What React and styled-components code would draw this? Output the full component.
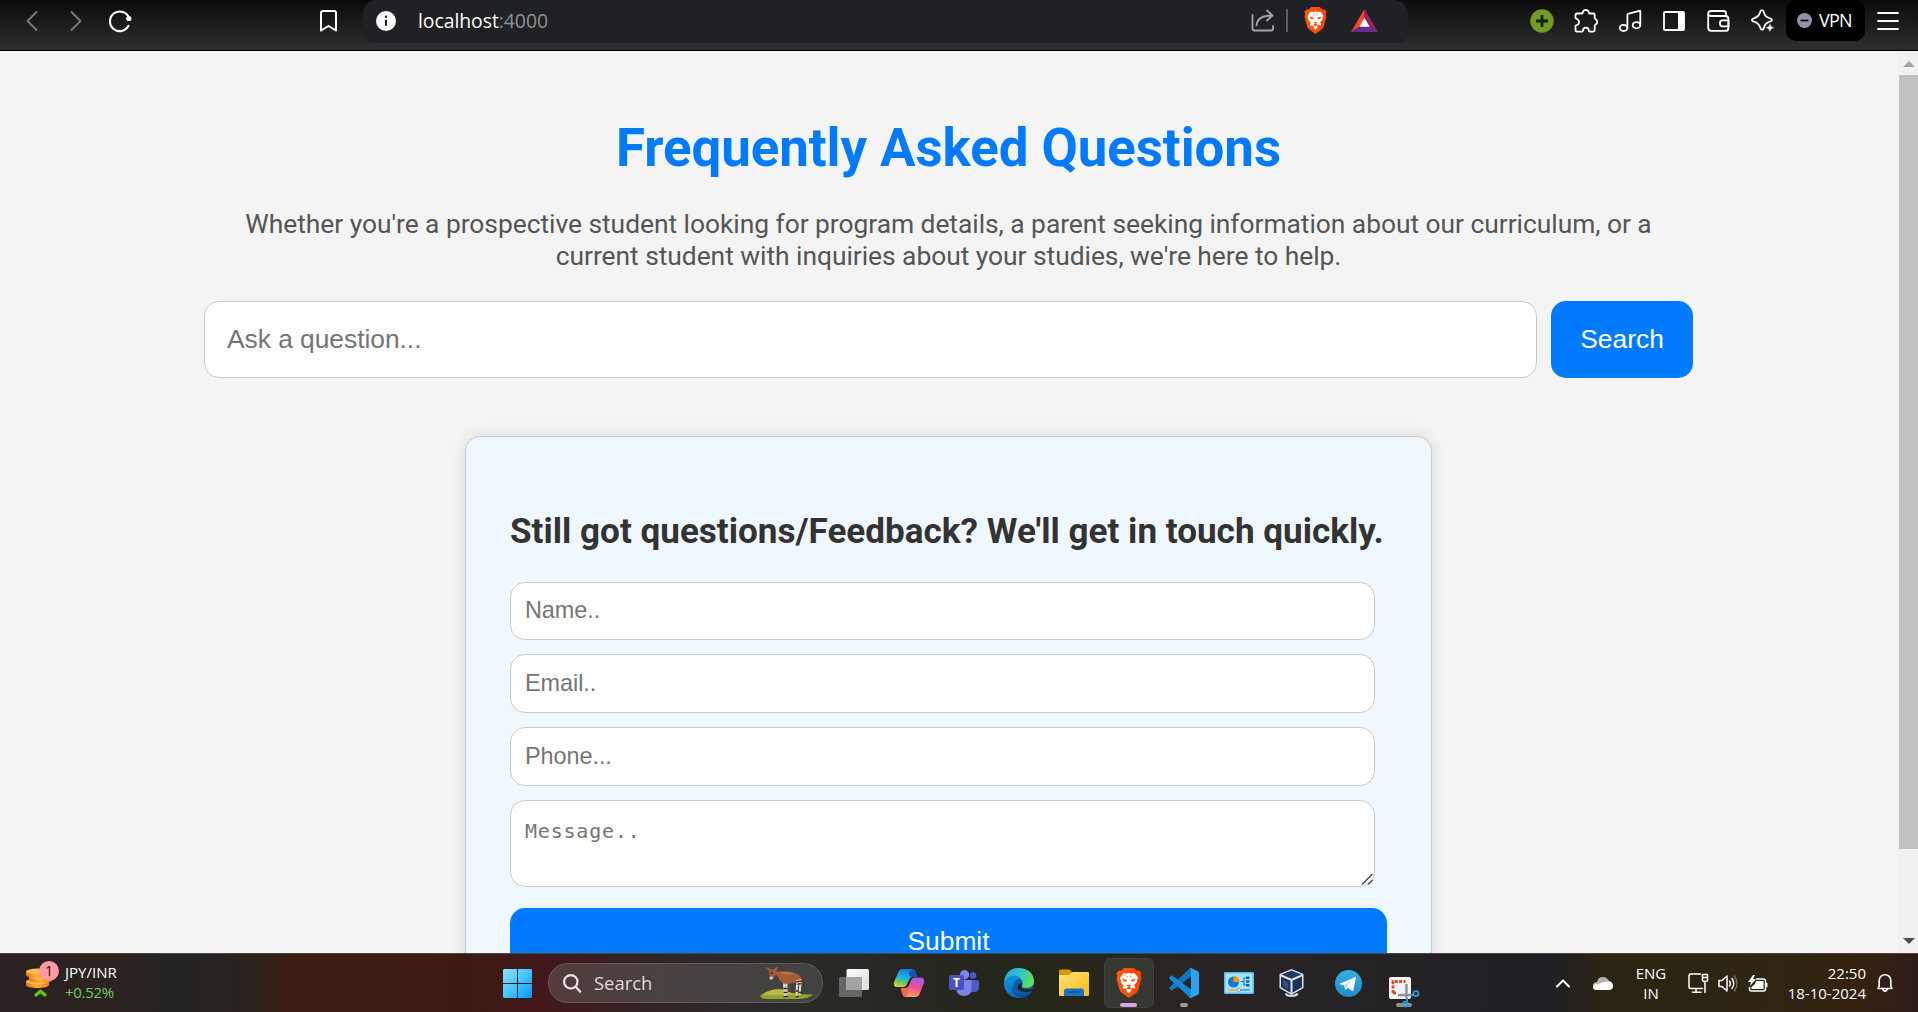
import React from "react";
import styled, { createGlobalStyle, css } from "styled-components";

const GlobalStyle = createGlobalStyle`
  * { box-sizing: border-box; }
  html, body { margin: 0; padding: 0; overflow: hidden; }
  body { font-family: Roboto, sans-serif; background: #f4f4f4; }
`;

const Screen = styled.div`
  width: 1918px;
  height: 1012px;
  display: flex;
  flex-direction: column;
  overflow: hidden;
`;

/* ---------- browser toolbar ---------- */

const Toolbar = styled.header`
  flex: none;
  display: flex;
  height: 51px;
  border-bottom: 1px solid #000;
  background: linear-gradient(#0a0a0a, #2c2c2c 90%);
  color: #fff;
  font-family: "Noto Sans", "Open Sans", sans-serif;
`;

const NavGroup = styled.div`
  display: flex;
  height: 41px;
  margin-left: ${(p) => p.$offset || 0}px;
`;

const IconSlot = styled.span`
  display: flex;
  align-items: center;
  justify-content: center;
  width: ${(p) => p.$width || 44}px;
  height: 41px;
  svg { display: block; overflow: visible; }
`;

const AddressBar = styled.div`
  display: flex;
  align-items: center;
  width: 1045px;
  height: 43px;
  margin-left: 13px;
  padding: 0 30px 2px 13px;
  border-radius: 14px 14px 10px 10px;
  background: #202124;
  svg { display: block; }
`;

const Url = styled.span`
  flex: 1;
  margin-left: 22px;
  font-family: "Open Sans", "Noto Sans", sans-serif;
  font-size: 19.4px;
  line-height: 24px;
  letter-spacing: -0.05px;
`;

const Port = styled.span`
  color: #8d9095;
`;

const Separator = styled.i`
  width: 2px;
  height: 23px;
  margin: 0 16px 0 12px;
  background: #5c5d60;
`;

const VpnPill = styled.div`
  display: flex;
  align-items: center;
  gap: 7px;
  width: 79px;
  height: 41px;
  margin-left: 2px;
  padding: 0 0 1px 11px;
  border-radius: 10px;
  background: #000;
  font-family: "Open Sans", sans-serif;
  font-size: 18px;
  letter-spacing: -0.8px;
`;

/* ---------- page ---------- */

const Viewport = styled.div`
  flex: none;
  display: flex;
  height: 902px;
  overflow: hidden;
  background: #f4f4f4;
`;

const Page = styled.main`
  width: 1898px;
  display: flex;
  flex-direction: column;
  align-items: center;
  height: 902px;
  padding-right: 1px;
  overflow: hidden;
`;

const Title = styled.h1`
  margin: 66px 0 29px;
  color: #007bff;
  font-size: 52.8px;
  font-weight: 700;
  line-height: 62px;
  letter-spacing: -0.05px;
  white-space: nowrap;
`;

const Intro = styled.p`
  margin: 0 0 29px;
  color: #555;
  font-size: 26.4px;
  line-height: 32px;
  letter-spacing: -0.04px;
  text-align: center;
  white-space: nowrap;
`;

const SearchRow = styled.div`
  display: flex;
  gap: 14px;
  margin-bottom: 58px;
`;

const fieldBase = css`
  display: block;
  border: 1px solid #ccc;
  border-radius: 15px;
  outline: none;
  background: #fff;
  &::placeholder { color: #757575; opacity: 1; }
`;

const SearchInput = styled.input`
  ${fieldBase}
  width: 1333px;
  height: 77px;
  padding: 0 22px;
  font: 26.4px "Liberation Sans", Arial, sans-serif;
  letter-spacing: -0.04px;
`;

const BlueButton = styled.button`
  flex: none;
  width: ${(p) => p.$width}px;
  height: ${(p) => p.$height}px;
  padding: 0;
  border: 0;
  border-radius: 15px;
  background: #007bff;
  color: #fff;
  font: 26.4px "Liberation Sans", Arial, sans-serif;
`;

const Card = styled.form`
  flex: none;
  width: 967px;
  height: 620px;
  padding: 74px 44px 0;
  border: 1px solid #ccc;
  border-radius: 15px;
  background: #f0f8ff;
  box-shadow: 0 0 16px rgba(0, 0, 0, 0.1);
`;

const CardTitle = styled.h2`
  margin: 0 0 30px;
  color: #333;
  font-size: 35.1px;
  font-weight: 700;
  line-height: 41px;
  white-space: nowrap;
`;

const Fields = styled.div`
  display: flex;
  flex-direction: column;
  gap: 14px;
  margin-bottom: 21px;
`;

const Field = styled.input`
  ${fieldBase}
  width: 865px;
  height: ${(p) => p.$height || 59}px;
  padding: 0 15px ${(p) => (p.$height ? 2 : 1)}px 14px;
  font: 23.4px "Liberation Sans", Arial, sans-serif;
  letter-spacing: -0.04px;
`;

const MessageWrap = styled.div`
  position: relative;
  width: 865px;
  height: 87px;
`;

const Message = styled.textarea`
  ${fieldBase}
  width: 865px;
  height: 87px;
  padding: 15px 14px;
  resize: none;
  font: 20px/31px "DejaVu Sans Mono", monospace;
  letter-spacing: 0.8px;
`;

const Grip = styled.svg`
  position: absolute;
  right: 2px;
  bottom: 2px;
`;

const Scrollbar = styled.aside`
  display: flex;
  flex-direction: column;
  align-items: flex-end;
  width: 20px;
  height: 902px;
  background: #f1f1f1;
`;

const Arrow = styled.i`
  width: 0;
  height: 0;
  margin: ${(p) => (p.$down ? "89px 3px 0 0" : "10px 3px 8px 0")};
  border: 6px solid transparent;
  border-width: ${(p) => (p.$down ? "6px 6px 0" : "0 6px 6px")};
  border-top-color: ${(p) => (p.$down ? "#505050" : "transparent")};
  border-bottom-color: ${(p) => (p.$down ? "transparent" : "#a3a3a3")};
`;

const Thumb = styled.i`
  width: 19px;
  height: 774px;
  background: #c1c1c1;
`;

/* ---------- taskbar ---------- */

const Taskbar = styled.footer`
  flex: none;
  display: flex;
  height: 59px;
  border-top: 1px solid #4a4542;
  background: linear-gradient(
    90deg,
    #2a2224 0, #2c231f 100px, #232321 180px, #2a221d 250px, #3a1d13 290px,
    #3b1a13 460px, #43171a 540px, #332222 640px, #2b2b2a 740px, #272722 900px,
    #25261a 1010px, #26261c 1100px, #2b2521 1160px, #272325 1260px,
    #242225 1400px, #201f25 1550px, #2a2414 1600px, #2e2512 1780px,
    #35210f 1860px, #2f1c1a 1918px
  );
  color: #fff;
  font-family: "Open Sans", "Noto Sans", sans-serif;
  svg { display: block; overflow: visible; }
`;

const Widget = styled.div`
  display: flex;
  width: 490px;
  padding: 5px 0 0 25px;
`;

const CoinHolder = styled.div`
  position: relative;
  width: 40px;
  height: 45px;
`;

const Badge = styled.b`
  position: absolute;
  left: 14px;
  top: 2px;
  width: 20px;
  height: 20px;
  border-radius: 50%;
  background: #ff99a4;
  color: #2a1416;
  font-size: 14px;
  font-weight: 400;
  line-height: 20px;
  text-align: center;
`;

const Lines = styled.div`
  display: flex;
  flex-direction: column;
  font-size: 15px;
  line-height: 20px;
  text-align: ${(p) => p.$align || "left"};
  width: ${(p) => (p.$width ? p.$width + "px" : "auto")};
  padding-top: ${(p) => p.$top || 0}px;
  white-space: nowrap;
`;

const Gain = styled.span`
  color: #6ccb5f;
  letter-spacing: -0.3px;
`;

const AppSlot = styled.div`
  position: relative;
  display: flex;
  align-items: center;
  justify-content: center;
  width: 55px;
  height: 58px;
`;

const ActiveTile = styled.div`
  display: flex;
  align-items: center;
  justify-content: center;
  width: 50px;
  height: 50px;
  border: 1px solid #40403a;
  border-radius: 6px;
  background: #373732;
`;

const Indicator = styled.i`
  position: absolute;
  bottom: 5px;
  left: ${(p) => (55 - p.$width) / 2}px;
  width: ${(p) => p.$width}px;
  height: 4px;
  border-radius: 2px;
  background: ${(p) => p.$color};
`;

const SearchPill = styled.div`
  display: flex;
  align-items: center;
  width: 275px;
  height: 40px;
  margin: 9px 3px 0;
  padding: 0 8px 0 14px;
  border: 1px solid rgba(255, 255, 255, 0.13);
  border-radius: 20px;
  background: linear-gradient(90deg, #553a3b, #484241 40%, #424240);
`;

const SearchLabel = styled.span`
  flex: 1;
  margin-left: 13px;
  color: #dedada;
  font-size: 18.4px;
  line-height: 26px;
`;

const Tray = styled.div`
  display: flex;
  align-items: center;
  margin-left: 125px;
`;

const TrayItem = styled.span`
  flex: none;
  display: flex;
  width: ${(p) => p.$width}px;
  margin-left: ${(p) => p.$before || 0}px;
`;

const LetterTile = styled.span`
  position: absolute;
  left: 13px;
  top: 21px;
  width: 15px;
  height: 15px;
  border-radius: 2px;
  background: #4a50bd;
  color: #fff;
  font: 700 12px/15px "Open Sans", sans-serif;
  text-align: center;
`;

const Dropped = styled.span`
  padding-top: 18px;
  position: relative;
  z-index: 1;
`;

/* ---------- icons ---------- */

const Line = ({ w = 24, h = 24, color = "#fff", sw = 1.8, children }) => (
  <svg width={w} height={h} viewBox={`0 0 ${w} ${h}`} fill="none" stroke={color}
    strokeWidth={sw} strokeLinecap="round" strokeLinejoin="round">
    {children}
  </svg>
);

const BraveMark = ({ w, h, id }) => (
  <svg width={w} height={h} viewBox="0 0 24 28" preserveAspectRatio="none">
    <defs>
      <linearGradient id={id} x1="0" x2="1">
        <stop offset="0" stopColor="#ff5a10" />
        <stop offset="1" stopColor="#ff4000" />
      </linearGradient>
    </defs>
    <path d="M7.500 0h9l2.700 2.600 2-.3L23.600 5l-.9 2.300.8 2.300-2.900 11q-.4 1.400-1.500 2.200L12 28l-7.100-5.200q-1.100-.8-1.500-2.200l-2.900-11 .8-2.300L.4 5l2.400-2.700 2 .3z" fill={`url(#${id})`} />
    <path d="M7 4.600l2.600.5L12 4.600l2.400.5 2.600-.5 3.400 4.200-1.100 2.300.3 1.800-3 3.300 1.400 1.300-.8 1.600-2.200-.4-1.400 1.100.8 1.500L12 23.700l-2.400-1.900.8-1.500L9 19.200l-2.200.4-.8-1.600 1.400-1.300-3-3.300.3-1.800-1.100-2.300z" fill="#fff" />
    <path d="M5.600 9.900l4.600 1.300-.6 1.500-2.300-.3zM18.400 9.900l-4.600 1.300.6 1.500 2.300-.3zM9.500 16.300l2.500 1.200 2.500-1.200-2.500-.8zM9.300 18.700L12 17.200l2.700 1.500-2.700 1.300zM8.600 6.700l2.200.9.4 1.300zM15.400 6.700l-2.200.9-.4 1.300z" fill="#fc4c0e" />
  </svg>
);

const InfoIcon = () => (
  <svg width="20" height="20" viewBox="0 0 20 20">
    <circle cx="10" cy="10" r="10" fill="#fff" />
    <circle cx="10" cy="5.800" r="1.200" fill="#202124" />
    <path d="M10 8.800v6" stroke="#202124" strokeWidth="2" />
  </svg>
);

const ShareIcon = () => (
  <Line w={24} h={23} color="#a4a5a8" sw={1.8}>
    <path d="M2.500 6v13.500q0 2 2 2H21q2 0 2-2V17" />
    <path d="M6.500 16.500C7 9.500 12 6.500 22.500 6.500M17 1.500l5.500 5-5.500 5" />
  </Line>
);

const BatIcon = () => (
  <svg width="27" height="23" viewBox="0 0 27 23">
    <path d="M13.500 0L0 23l9.500-6 4-7z" fill="#ff4724" />
    <path d="M13.500 0L27 23l-9.500-6-4-7z" fill="#9e1f63" />
    <path d="M0 23h27l-9.500-6h-8z" fill="#662d91" />
    <path d="M13.500 8.800l5.100 9H8.400z" fill="#fff" />
  </svg>
);

const PlusBadge = () => (
  <svg width="24" height="24" viewBox="0 0 24 24">
    <circle cx="12" cy="12" r="11.700" fill="#739b21" />
    <path d="M12 6v12M6 12h12" stroke="#16200a" strokeWidth="2.800" />
  </svg>
);

const PuzzleIcon = () => (
  <Line w={24} h={24}>
    <path d="M3 4.500h5.200c.5 0 .7-.5.5-1A3.300 3.300 0 0 1 11.800.9a3.300 3.300 0 0 1 3.100 2.600c0 .6.200 1 .8 1h3.500q1.500 0 1.500 1.500v3c0 .7.500 1 1 1.300a3 3 0 0 1 0 5.200c-.5.300-1 .6-1 1.300v4.300q0 1.500-1.500 1.500h-3.400c-.6 0-.9-.3-1-1a2.900 2.900 0 0 0-5.800 0c-.1.700-.4 1-1 1H3q-1.500 0-1.500-1.500v-4.300l2.400-1.300a3 3 0 0 0 0-4.700L1.500 9V6Q1.500 4.500 3 4.500z" />
  </Line>
);

const MusicIcon = () => (
  <Line w={23} h={23}>
    <ellipse cx="4.600" cy="18.900" rx="3.800" ry="3.100" />
    <ellipse cx="17.500" cy="16.200" rx="3.800" ry="3.100" />
    <path d="M8.400 18.500V6.300q0-1.400 1.300-1.700l11.600-3v14.500" />
  </Line>
);

const SidebarIcon = () => (
  <svg width="22" height="20" viewBox="0 0 22 20">
    <rect x="1" y="1" width="20" height="18" rx="1" fill="none" stroke="#fff" strokeWidth="1.800" />
    <path d="M15 1h6v18h-6z" fill="#fff" />
  </svg>
);

const WalletIcon = () => (
  <Line w={23} h={22}>
    <path d="M1.200 3.500v14.200q0 3.200 3.200 3.200h14q3 0 3-3V9q0-3-3-3H4Q1.200 6 1.200 3.500T4 1h12.500q2.500 0 2.500 2.500V6" />
    <path d="M21.500 10.300h-6q-2.500 0-2.500 2.500v1q0 2.500 2.500 2.500h6z" />
  </Line>
);

const SparkleIcon = () => (
  <Line w={23} h={23}>
    <path d="M11 1.200q1.400 0 1.800 1.800c1 4 2.200 5.200 6.200 6.300 2.600.8 2.600 2.600 0 3.300-3 .8-5.300 2.400-6.100 6.200-.6 2.600-2.900 2.600-3.600 0-1-3.700-2.500-5.200-6.500-6.200-2.500-.7-2.500-2.600 0-3.300C6.800 8.200 8.200 6.700 9.200 3Q9.700 1.200 11 1.200z" />
    <path d="M19 13.800l1.400 3.500 3.400 1.500-3.400 1.400-1.400 3.600-1.500-3.600-3.400-1.400 3.400-1.500z" fill="#fff" stroke="#1a1a1a" strokeWidth=".6" />
  </Line>
);

const Coins = () => (
  <svg width="40" height="45" viewBox="0 0 40 45">
    <defs>
      <linearGradient id="coin" x1="0" x2="1">
        <stop offset="0" stopColor="#e87812" />
        <stop offset=".5" stopColor="#ffae35" />
        <stop offset="1" stopColor="#e87812" />
      </linearGradient>
    </defs>
    {[[12.5, 22.5], [15.5, 17.5], [12.5, 12.5]].map(([x, y]) => (
      <g key={y}>
        <path d={`M${x - 11.5} ${y}v3.500c0 4 23 4 23 0v-3.500z`} fill="url(#coin)" />
        <ellipse cx={x} cy={y} rx="11.500" ry="2.900" fill="#ffbd4b" />
      </g>
    ))}
    <path d="M11 36l4.500-3.800 4.500 3.800" fill="none" stroke="#5fc80a" strokeWidth="3.400" strokeLinecap="round" strokeLinejoin="round" />
  </svg>
);

const WindowsLogo = () => (
  <svg width="29" height="29" viewBox="0 0 29 29">
    <defs>
      <linearGradient id="win" gradientUnits="userSpaceOnUse" x1="0" y1="0" x2="29" y2="29">
        <stop offset="0" stopColor="#8be1ff" />
        <stop offset=".5" stopColor="#44c6fb" />
        <stop offset="1" stopColor="#0a93ff" />
      </linearGradient>
    </defs>
    <path d="M1 0h13v14H0V1zM15 0h13l1 1v13H15zM0 15h14v14H1l-1-1zM15 15h14v13l-1 1H15z" fill="url(#win)" />
  </svg>
);

const Okapi = () => (
  <svg width="54" height="34" viewBox="0 0 54 34">
    <path d="M0 30Q8 22.500 22 23.500q9 5 31 5-4 4-15 4.500H7q-6 0-7-3z" fill="#8fa52b" />
    <path d="M2 29Q10 22.500 22 23.500q6 3 14 5-16 1-34 .5z" fill="#bdb744" />
    <path d="M26.500 17v14M24 17l.7 14M40.500 16l-1 13M37 17l-.5 14" stroke="#eadfd3" strokeWidth="2" />
    <path d="M23.500 22.500h4M23.500 26.500h4M23.500 30.500h4.500M36 25h2.500M35.500 30.500h3M39 26.500h2.500" stroke="#33221b" strokeWidth="1.300" />
    <path d="M9 4.500L6 1.500q3-.5 5 2h2.500q2-3 4.500-2.500-.5 3-2.800 4.300L20 5.500q8-1 15 1.500 6 2 7 7l-.5 5-3-1-3.500-1.500q-5 2-12 1-4-3-5.500-8l-2.500-.3-1.500 3q-2 1.800-3.500-.2z" fill="#a35a38" />
    <path d="M20 6q8-1 15 1.500-5 2-12 .5z" fill="#bd7148" />
    <path d="M10 10.500l3 .5-.5 2.300q-2 1.200-3-.5z" fill="#d9cbc2" />
    <path d="M36.500 14.500l5-.8M36 17l5.500-.5M37.500 19.300l4-.5" stroke="#e0cdbc" strokeWidth="1" />
    <path d="M36.500 15.800l5-.8M36.500 18.300l5-.5" stroke="#3b251c" strokeWidth=".9" />
    <path d="M11 7.200h1.600" stroke="#1d120f" strokeWidth="1.400" />
    <path d="M41.500 11q2.500 4 1.800 9" fill="none" stroke="#60331f" strokeWidth="1.200" />
  </svg>
);

const TaskView = () => (
  <svg width="30" height="28" viewBox="0 0 30 28">
    <defs>
      <linearGradient id="tv" x1="0" y1="0" x2="1" y2="1">
        <stop offset="0" stopColor="#fff" />
        <stop offset="1" stopColor="#dcdcdc" />
      </linearGradient>
    </defs>
    <rect x="0" y="8" width="23" height="20" rx="1.500" fill="#666" />
    <rect x="7.500" y="0" width="22.500" height="21" rx="1.500" fill="url(#tv)" />
    <path d="M7.500 8H23v13H7.500z" fill="#a3a3a3" />
  </svg>
);

const Copilot = () => (
  <svg width="30" height="28" viewBox="0 0 30 28">
    <defs>
      <linearGradient id="cpA" x1=".5" y1="0" x2=".2" y2="1">
        <stop offset="0" stopColor="#1479e0" />
        <stop offset=".45" stopColor="#1fb0e3" />
        <stop offset=".72" stopColor="#62c966" />
        <stop offset="1" stopColor="#f4cf27" />
      </linearGradient>
      <linearGradient id="cpB" x1=".7" y1="0" x2=".4" y2="1">
        <stop offset="0" stopColor="#a558ef" />
        <stop offset=".5" stopColor="#ec5192" />
        <stop offset="1" stopColor="#ffa055" />
      </linearGradient>
    </defs>
    <path d="M9 0h9q3 0 4 4l1 4h-4q-3 0-4 3l-2 4q-1 3-4 3H3q-4 0-3-5L4 4q1-4 5-4z" fill="url(#cpA)" />
    <path d="M18 0q3 0 4 4l1 4h-5q-3 0-3-4z" fill="#1552a8" />
    <path d="M22 8.500h4q5 0 4 5l-4 10.500q-1 4-5 4h-9q-3 0-4-4l-1-5h4q3 0 4-3l2-4.500q1-3 5-3z" fill="url(#cpB)" />
    <path d="M12 28q-3 0-4-4l-1-5h5q3 0 2 5z" fill="#f6654f" />
  </svg>
);

const Teams = () => (
  <svg width="30" height="27" viewBox="0 0 30 27">
    <circle cx="24" cy="5.500" r="3.300" fill="#5059c9" />
    <path d="M18 10h10.500q1.500 0 1.500 1.500V17q0 5-5 5h-7z" fill="#5059c9" />
    <circle cx="15.500" cy="4.700" r="4.700" fill="#7b83eb" />
    <path d="M8 10h13.500q1 0 1 1v8q0 7-7.500 7t-7.500-7z" fill="#7b83eb" />
  </svg>
);

const Edge = () => (
  <svg width="30" height="30" viewBox="0 0 30 30">
    <defs>
      <linearGradient id="edA" x1="0" y1=".2" x2="1" y2=".5">
        <stop offset="0" stopColor="#2ba7e0" />
        <stop offset=".5" stopColor="#35c1c8" />
        <stop offset="1" stopColor="#63df4e" />
      </linearGradient>
      <linearGradient id="edB" x1="0" y1="0" x2=".6" y2="1">
        <stop offset="0" stopColor="#1398e2" />
        <stop offset="1" stopColor="#0968b5" />
      </linearGradient>
    </defs>
    <circle cx="15" cy="15" r="15" fill="#0c59a4" />
    <path d="M12 12q-5 8 2 13 6 4 14-2-4 7-13 7Q1 29 0 15q2-7 8-8 7-1 9 4z" fill="url(#edB)" />
    <path d="M10 15q-2 9 5 11 8 2 12.500-3.500l1 .5q-3 5-10 7-9-2-10.500-8z" fill="#0d4f96" />
    <path d="M0 14Q2 0 15 0q14 1 15 13 0 7-8 7-5 0-4-2 2-3-1-7-4-5-10-3-5 2-7 6z" fill="url(#edA)" />
    <path d="M17.500 20q5 3 13 0l1 3-3 0q-9 3-15-2 0-5 4-6 1 2 0 5z" fill="#23231f" />
  </svg>
);

const Folder = () => (
  <svg width="30" height="28" viewBox="0 0 30 28">
    <defs>
      <linearGradient id="fo" x1="0" y1="0" x2="1" y2="1">
        <stop offset="0" stopColor="#ffe27a" />
        <stop offset="1" stopColor="#fdb912" />
      </linearGradient>
    </defs>
    <path d="M0 2q0-1.500 1.500-1.500h9L14 4v6H0z" fill="#d89a0c" />
    <path d="M0 6h10l4-3h15q1 0 1 1v22q0 1-1 1H1q-1 0-1-1z" fill="url(#fo)" />
    <path d="M5 27v-5q0-2.500 2.500-2.500h15Q25 19.500 25 22v5z" fill="#1674c4" />
    <path d="M9 23h12" stroke="#0b4d91" strokeWidth="1.400" />
  </svg>
);

const VsCode = () => (
  <svg width="30" height="30" viewBox="0 0 30 30">
    <path d="M22 8.500L3.500 22.300q-.8.500-1.500 0L.4 20.800q-.7-.8 0-1.500L20.500.7Q21 .2 22 0z" fill="#0f78c5" />
    <path d="M22 21.500L3.500 7.700q-.8-.5-1.500 0L.4 9.200q-.7.800 0 1.500l20.100 18.600q.5.500 1.500.7z" fill="#1689d6" />
    <path d="M22 0l7 3.300q1 .5 1 1.700v20q0 1.200-1 1.700L22 30q-1 0-1.800-.8.800.3 1.800-.7V1.500q-1-1-1.800-.7Q21 0 22 0z" fill="#2ba4f2" />
  </svg>
);

const ControlPanel = () => (
  <svg width="30" height="22" viewBox="0 0 30 22">
    <rect width="30" height="22" rx="1" fill="#58bce8" />
    <rect x="1.500" y="1.500" width="27" height="19" fill="#a5e4fb" />
    <circle cx="9.500" cy="10" r="5.500" fill="#1479c9" />
    <path d="M9.500 10V3.500a6 6 0 0 1 6 6.500z" fill="#f39a1e" />
    <path d="M16.500 9.500h3.500V6h2M20 9.500V13h2" fill="none" stroke="#1479c9" strokeWidth="1.100" />
    <path d="M22 4.500h3.500v2.400H22zM22 8.300h3.500v2.400H22zM22 12h3.500v2.400H22z" fill="#1a62ab" />
    <path d="M4 18h9" stroke="#f39a1e" strokeWidth="1.300" />
    <path d="M15 18h11" stroke="#1479c9" strokeWidth="1.100" />
    <circle cx="15" cy="18" r="1.600" fill="#fff" stroke="#467b99" strokeWidth=".6" />
  </svg>
);

const VirtualBox = () => (
  <svg width="30" height="28" viewBox="0 0 30 28">
    <path d="M7 24q5 4 11 0l1.500 1q-1 3-7 3T6 25z" fill="#d2dbe8" />
    <path d="M12.500 0l12 5v14l-12 7-12-7V5z" fill="#dbe3ee" />
    <path d="M12.500 1.500L22.500 5.500l-10 4.200-10-4.200z" fill="#203a62" />
    <path d="M2 7.500l9.500 4.200v12L2 18.200zM23 7.500l-9.500 4.200v12l9.500-5.500z" fill="#1b3358" />
    <path d="M4 11l5 2.500v6.500l-5-3z" fill="#31507f" />
  </svg>
);

const Telegram = () => (
  <svg width="27" height="27" viewBox="0 0 27 27">
    <defs>
      <linearGradient id="tg" x1="0" y1="0" x2="0" y2="1">
        <stop offset="0" stopColor="#35ade2" />
        <stop offset="1" stopColor="#1c8fc6" />
      </linearGradient>
    </defs>
    <circle cx="13.500" cy="13.500" r="13.500" fill="url(#tg)" />
    <path d="M5 13.500L20 7.300q1-.2.800 1l-2.400 11.900q-.4 1.200-1.500.5l-4-3-2 2q-.8.600-.9-.5L9 15.500l-4-1.200q-.8-.4 0-.8z" fill="#fff" />
    <path d="M9.300 15.300l8.700-5.600-6.600 6.700-.6 3z" fill="#b9d9ea" />
  </svg>
);

const Snip = () => (
  <svg width="30" height="30" viewBox="0 0 30 30">
    <rect x="0" y="0" width="22" height="22" rx="2" fill="#f3f3f3" />
    <path d="M4 16V4.500h12.500M4 16h3" fill="none" stroke="#d24a27" strokeWidth="2.800" strokeDasharray="3 1.400" />
    <path d="M17.500 7v14M9 18h14" stroke="#8b9399" strokeWidth="2.400" />
    <circle cx="27" cy="16.500" r="2.500" fill="none" stroke="#2f9fd8" strokeWidth="1.700" />
    <circle cx="16.500" cy="27" r="2.500" fill="none" stroke="#2f9fd8" strokeWidth="1.700" />
    <path d="M18 24v-3M22 18h3" stroke="#2f9fd8" strokeWidth="1.800" />
  </svg>
);

const Cloud = () => (
  <svg width="20" height="13" viewBox="0 0 20 13">
    <path d="M0 9q0-4 4-4 1-5 6-5 4 0 6 4l-10 8Q0 13 0 9z" fill="#b5b2ab" />
    <path d="M3 13q-3 0-3-3t4-3q2 0 4-1l8-2q4 1 4 5 0 4-4 4z" fill="#fff" />
  </svg>
);

const Monitor = () => (
  <Line w={21} h={21} sw={1.5}>
    <path d="M12.500 1H2.800Q1 1 1 2.800v11Q1 15.500 2.800 15.500h11.700M8 15.500V19M4.500 19.300h8.500" />
    <path d="M14.500 1.500h5v5.700q0 1-1 1h-3q-1 0-1-1zM14.500 4.500h5M17 8.500v11" />
  </Line>
);

const Speaker = () => (
  <Line w={20} h={17} sw={1.5}>
    <path d="M1 5.500h3L9 1v15l-5-4.500H1zM11.500 6q1.700 2.500 0 5M14 3.500q3.500 5 0 10" />
    <path d="M16.500 1q5 7.500 0 15" stroke="#77705f" />
  </Line>
);

const Battery = () => (
  <svg width="20" height="17" viewBox="0 0 20 17">
    <path d="M8 4h7.500q2 0 2 2v8q0 2-2 2h-12q-2 0-2-2v-2" fill="none" stroke="#fff" strokeWidth="1.500" />
    <path d="M8 6h7.500v8h-12v-2l3.500-3zM18 8h1.500v4H18zM5 0L0 7h3l-1 4 6-7H5l2-4z" fill="#fff" />
  </svg>
);

const apps = [
  { name: "tasks", icon: <TaskView /> },
  { name: "copilot", icon: <Copilot /> },
  { name: "teams", icon: <><Teams /><LetterTile>T</LetterTile></> },
  { name: "edge", icon: <Edge /> },
  { name: "files", icon: <Folder /> },
  {
    name: "brave",
    icon: <ActiveTile><BraveMark w={26} h={30} id="braveTask" /></ActiveTile>,
    bar: [17, "#dda3e8"],
  },
  { name: "code", icon: <VsCode />, bar: [8, "#9b9999"] },
  { name: "control", icon: <ControlPanel /> },
  { name: "vbox", icon: <VirtualBox /> },
  { name: "telegram", icon: <Telegram /> },
  { name: "snip", icon: <Snip />, bar: [16, "#8f8e90"], drop: true },
];

export default function App() {
  return (
    <Screen>
      <GlobalStyle />
      <Toolbar>
        <NavGroup $offset={10}>
          <IconSlot><Line w={12} h={20} color="#77787a" sw={1.9}><path d="M10.500 1L1.500 10l9 9" /></Line></IconSlot>
          <IconSlot><Line w={12} h={20} color="#77787a" sw={1.9}><path d="M1.500 1l9 9-9 9" /></Line></IconSlot>
          <IconSlot>
            <Line w={22} h={22} sw={2.1}>
              <path d="M19.500 15.800A9.800 9.800 0 1 1 20 8" />
              <circle cx="19.800" cy="8.500" r="2.600" fill="#fff" stroke="none" />
            </Line>
          </IconSlot>
        </NavGroup>
        <NavGroup $offset={164}>
          <IconSlot><Line w={17} h={22} sw={2}><path d="M3 1h11q2 0 2 2v17.500L8.500 16 1 20.500V3q0-2 2-2z" /></Line></IconSlot>
        </NavGroup>
        <AddressBar>
          <InfoIcon />
          <Url>localhost<Port>:4000</Port></Url>
          <ShareIcon />
          <Separator />
          <BraveMark w={23} h={27} id="braveBar" />
          <NavGroup $offset={24}><IconSlot $width={27}><BatIcon /></IconSlot></NavGroup>
        </AddressBar>
        <NavGroup $offset={112}>
          <IconSlot><PlusBadge /></IconSlot>
          <IconSlot><PuzzleIcon /></IconSlot>
          <IconSlot><MusicIcon /></IconSlot>
          <IconSlot><SidebarIcon /></IconSlot>
          <IconSlot><WalletIcon /></IconSlot>
          <IconSlot><SparkleIcon /></IconSlot>
        </NavGroup>
        <VpnPill>
          <svg width="15" height="15" viewBox="0 0 15 15">
            <circle cx="7.500" cy="7.500" r="7.500" fill="#9293ab" />
            <path d="M3.500 7.500h8" stroke="#111" strokeWidth="1.800" />
          </svg>
          VPN
        </VpnPill>
        <NavGroup $offset={1}>
          <IconSlot><Line w={22} h={18} sw={1.9}><path d="M1 1h20M1 9h20M1 17h20" /></Line></IconSlot>
        </NavGroup>
      </Toolbar>

      <Viewport>
        <Page>
          <Title>Frequently Asked Questions</Title>
          <Intro>
            Whether you're a prospective student looking for program details, a parent seeking information about our curriculum, or a
            <br />
            current student with inquiries about your studies, we're here to help.
          </Intro>
          <SearchRow>
            <SearchInput placeholder="Ask a question..." />
            <BlueButton type="button" $width={142} $height={77}>Search</BlueButton>
          </SearchRow>
          <Card>
            <CardTitle>Still got questions/Feedback? We'll get in touch quickly.</CardTitle>
            <Fields>
              <Field $height={58} placeholder="Name.." />
              <Field placeholder="Email.." />
              <Field placeholder="Phone..." />
              <MessageWrap>
                <Message placeholder="Message.." />
                <Grip width="12" height="12" viewBox="0 0 12 12" stroke="#444" strokeWidth="1.400">
                  <path d="M1 11.500L11.500 1M7 11.500L11.500 7" />
                </Grip>
              </MessageWrap>
            </Fields>
            <BlueButton type="button" $width={877} $height={66}>Submit</BlueButton>
          </Card>
        </Page>
        <Scrollbar>
          <Arrow />
          <Thumb />
          <Arrow $down />
        </Scrollbar>
      </Viewport>

      <Taskbar>
        <Widget>
          <CoinHolder><Coins /><Badge>1</Badge></CoinHolder>
          <Lines $top={3}>
            <span>JPY/INR</span>
            <Gain>+0.52%</Gain>
          </Lines>
        </Widget>
        <AppSlot><WindowsLogo /></AppSlot>
        <SearchPill>
          <Line w={18} h={19} color="#e8e4e4" sw={2.2}><circle cx="7.800" cy="7.800" r="6.700" /><path d="M12.700 12.700l4.500 5" /></Line>
          <SearchLabel>Search</SearchLabel>
          <Okapi />
        </SearchPill>
        {apps.map((a) => (
          <AppSlot key={a.name}>
            {a.drop ? <Dropped>{a.icon}</Dropped> : a.icon}
            {a.bar && <Indicator $width={a.bar[0]} $color={a.bar[1]} />}
          </AppSlot>
        ))}
        <Tray>
          <TrayItem $width={37}><Line w={14} h={8} sw={2}><path d="M1 7.500l6-6 6 6" /></Line></TrayItem>
          <TrayItem $width={42}><Cloud /></TrayItem>
          <Lines $width={32} $align="center"><span>ENG</span><span>IN</span></Lines>
          <TrayItem $width={30} $before={21}><Monitor /></TrayItem>
          <TrayItem $width={30}><Speaker /></TrayItem>
          <TrayItem $width={38}><Battery /></TrayItem>
          <Lines $width={80} $align="right"><span>22:50</span><span>18-10-2024</span></Lines>
          <TrayItem $width={16} $before={11}>
            <Line w={16} h={18} sw={1.6}><path d="M1 14.500h14L13.800 12V6.500a5.800 5.800 0 0 0-11.600 0V12zM5.500 15q2.500 4.500 5 0" /></Line>
          </TrayItem>
        </Tray>
      </Taskbar>
    </Screen>
  );
}
